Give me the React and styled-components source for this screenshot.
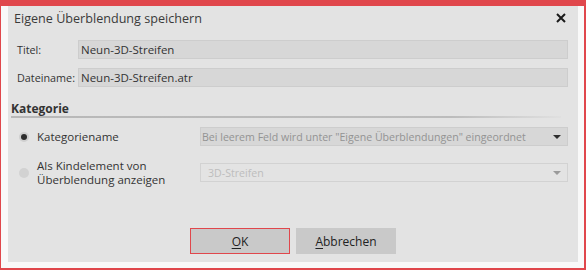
import React from "react";
import styled, { createGlobalStyle } from "styled-components";

const Global = createGlobalStyle`
  html, body { margin: 0; padding: 0; background: #ffffff; }
  body { font-family: "Open Sans", "Noto Sans", sans-serif; }
`;

const Frame = styled.div`
  box-sizing: border-box;
  width: 586px;
  height: 270px;
  border-style: solid;
  border-color: #e0474c;
  border-width: 6px 2px 2px 1px;
  background: #f9f9f9;
  padding: 0 6px 6px 7px;
  display: flex;
`;

const Panel = styled.div`
  flex: 1;
  background: #e3e3e3;
  display: flex;
  flex-direction: column;
  color: #333;
  font-size: 11.5px;
`;

const TitleBar = styled.div`
  height: 24px;
  display: flex;
  align-items: center;
  justify-content: space-between;
  padding: 0 12px 0 6px;
`;

const Title = styled.div`
  font-size: 12.6px;
  color: #3a3a3a;
`;

const Close = styled.div`
  width: 10px;
  height: 10px;
  display: flex;
`;

const Fields = styled.div`
  margin-top: 10px;
  display: grid;
  grid-template-columns: 61px 490px;
  row-gap: 9px;
  padding-left: 9px;
  align-items: center;
`;

const Label = styled.div`
  color: #333;
  white-space: nowrap;
  font-size: 10.8px;
`;

const Input = styled.div`
  box-sizing: border-box;
  height: 19px;
  background: #d7d7d7;
  border: 1px solid #cdcdcd;
  display: flex;
  align-items: center;
  padding-left: 2px;
  color: #333;
`;

const Section = styled.div`
  margin: 15px 0 0 3px;
  font-weight: 700;
  font-size: 12px;
  line-height: 14px;
  color: #333;
`;

const Rule = styled.div`
  margin: 0 0 0 3px;
  width: 550px;
  height: 2px;
  background: linear-gradient(to right, #b8b8b8 0%, #bcbcbc 80%, #e0e0e0 100%);
`;

const RadioRow = styled.div`
  display: flex;
  align-items: center;
  height: 19px;
  margin-top: ${(p) => p.$top}px;
  padding-left: 11px;
`;

const Radio = styled.div`
  box-sizing: border-box;
  flex-shrink: 0;
  width: 10px;
  height: 10px;
  border-radius: 50%;
  background: ${(p) => (p.$checked ? "#cfcfcf" : "#d2d2d2")};
  display: flex;
  align-items: center;
  justify-content: center;
  &::after {
    content: "";
    display: ${(p) => (p.$checked ? "block" : "none")};
    width: 6px;
    height: 6px;
    border-radius: 50%;
    background: #2e2e2e;
  }
`;

const RadioLabel = styled.div`
  flex-shrink: 0;
  margin-left: 8px;
  width: 163px;
  line-height: 14px;
  color: #333;
  white-space: nowrap;
`;

const Select = styled.div`
  box-sizing: border-box;
  flex-shrink: 0;
  width: 368px;
  height: 19px;
  border: 1px solid ${(p) => (p.$disabled ? "#d2d2d2" : "#cdcdcd")};
  background: ${(p) => (p.$disabled ? "#e3e3e3" : "#d7d7d7")};
  display: flex;
  align-items: center;
  justify-content: space-between;
  padding: 0 6px 0 1px;
  color: ${(p) => (p.$disabled ? "#bdbdbd" : "#939393")};
  white-space: nowrap;
  font-size: 10.6px;
`;

const SelectText = styled.span`
  padding-left: ${(p) => p.$indent || 0}px;
`;

const Arrow = styled.div`
  width: 0;
  height: 0;
  border-left: 4px solid transparent;
  border-right: 4px solid transparent;
  border-top: 4px solid ${(p) => (p.$disabled ? "#9a9a9a" : "#2e2e2e")};
`;

const Buttons = styled.div`
  margin-top: auto;
  margin-bottom: 8px;
  padding-left: 182px;
  display: flex;
  gap: 6px;
`;

const Button = styled.div`
  box-sizing: border-box;
  width: 100px;
  height: 26px;
  background: #c9c9c9;
  border: 1px solid ${(p) => (p.$primary ? "#e0474c" : "#c9c9c9")};
  display: flex;
  align-items: center;
  justify-content: center;
  color: #222;
  font-size: 12px;
  u { text-decoration: underline; text-underline-offset: 2px; }
`;

export default function App() {
  return (
    <>
      <Global />
      <Frame>
        <Panel>
          <TitleBar>
            <Title>Eigene Überblendung speichern</Title>
            <Close>
              <svg width="10" height="10" viewBox="0 0 10 10">
                <path d="M1 1 L9 9 M9 1 L1 9" stroke="#1a1a1a" strokeWidth="2" />
              </svg>
            </Close>
          </TitleBar>
          <Fields>
            <Label>Titel:</Label>
            <Input>Neun-3D-Streifen</Input>
            <Label>Dateiname:</Label>
            <Input>Neun-3D-Streifen.atr</Input>
          </Fields>
          <Section>Kategorie</Section>
          <Rule />
          <RadioRow $top={9}>
            <Radio $checked />
            <RadioLabel>Kategoriename</RadioLabel>
            <Select>
              <SelectText>Bei leerem Feld wird unter "Eigene Überblendungen" eingeordnet</SelectText>
              <Arrow />
            </Select>
          </RadioRow>
          <RadioRow $top={17}>
            <Radio />
            <RadioLabel>
              Als Kindelement von
              <br />
              Überblendung anzeigen
            </RadioLabel>
            <Select $disabled>
              <SelectText $indent={6}>3D-Streifen</SelectText>
              <Arrow $disabled />
            </Select>
          </RadioRow>
          <Buttons>
            <Button $primary>
              <span><u>O</u>K</span>
            </Button>
            <Button>
              <span><u>A</u>bbrechen</span>
            </Button>
          </Buttons>
        </Panel>
      </Frame>
    </>
  );
}
